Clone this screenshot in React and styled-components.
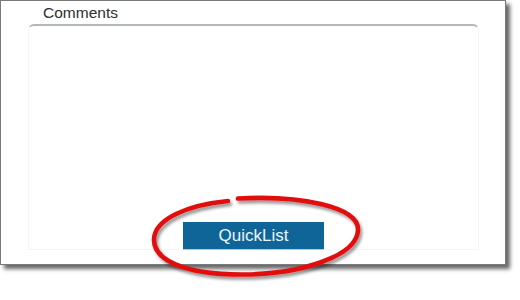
import React from "react";
import styled, { createGlobalStyle } from "styled-components";

const Global = createGlobalStyle`
  html, body { margin: 0; padding: 0; background: #ffffff; }
  body { width: 520px; height: 300px; overflow: hidden; font-family: "Liberation Sans", Arial, sans-serif; }
`;

const Frame = styled.div`
  position: relative;
  box-sizing: border-box;
  width: 506px;
  height: 265px;
  border: 1px solid #7a7a7a;
  background: #ffffff;
  box-shadow: 4px 4px 4px rgba(0, 0, 0, 0.6);
  display: flex;
  flex-direction: column;
  padding: 0 27px 14px 27px;
`;

const Title = styled.div`
  height: 25px;
  padding-left: 15px;
  font-size: 15.5px;
  line-height: 27px;
  color: #2e2e2e;
  margin-top: -2px;
`;

const CommentsBox = styled.div`
  box-sizing: border-box;
  width: 451px;
  flex: 1;
  border-top: 2px solid #b3b8b6;
  border-left: 1px solid #f5f5f5;
  border-right: 1px solid #f5f5f5;
  border-bottom: 1px solid #f5f5f5;
  border-radius: 6px 6px 0 0;
  display: flex;
  flex-direction: column;
  align-items: center;
  justify-content: flex-end;
`;

const Button = styled.button`
  box-sizing: border-box;
  width: 141px;
  height: 28px;
  margin: 0 0 -1px 0;
  padding: 0;
  border: none;
  border-bottom: 1px solid #8fd4ef;
  background: #0f6598;
  color: #eaf5fb;
  font-family: "Liberation Sans", Arial, sans-serif;
  font-size: 17px;
  line-height: 27px;
  cursor: pointer;
`;

const Annotation = styled.svg`
  position: absolute;
  left: 146px;
  top: 190px;
  width: 224px;
  height: 95px;
  overflow: visible;
  pointer-events: none;
`;

export default function App() {
  return (
    <>
      <Global />
      <Frame>
        <Title>Comments</Title>
        <CommentsBox>
          <Button>QuickList</Button>
        </CommentsBox>
        <Annotation viewBox="146 190 224 95">
          <defs>
            <filter id="sh" x="-10%" y="-20%" width="130%" height="150%">
              <feDropShadow dx="2" dy="3" stdDeviation="1.6" floodColor="#000" floodOpacity="0.4" />
            </filter>
          </defs>
          <path
            d="M237,197.5 C300,194 358,206 357,229 C356,255 300,273.5 240,273.5 C184,273.5 152,259 153,238 C154,218 186,204 227,200"
            fill="none"
            stroke="#e2100f"
            strokeWidth="4.6"
            strokeLinecap="round"
            filter="url(#sh)"
          />
        </Annotation>
      </Frame>
    </>
  );
}
